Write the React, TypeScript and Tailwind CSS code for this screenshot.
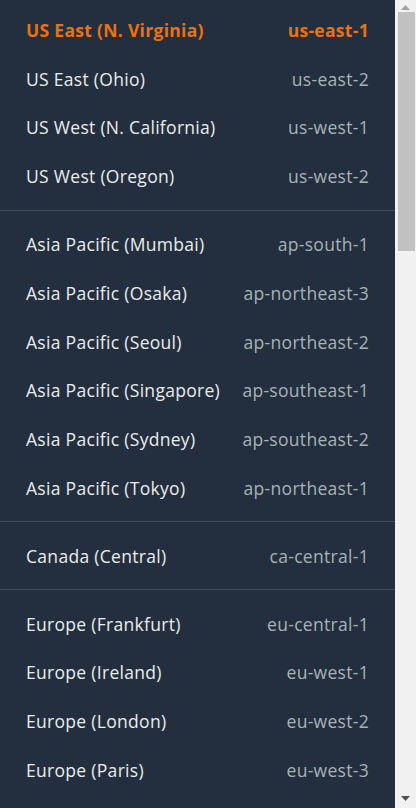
const groups: [string, string][][] = [
  [
    ["US East (N. Virginia)", "us-east-1"],
    ["US East (Ohio)", "us-east-2"],
    ["US West (N. California)", "us-west-1"],
    ["US West (Oregon)", "us-west-2"],
  ],
  [
    ["Asia Pacific (Mumbai)", "ap-south-1"],
    ["Asia Pacific (Osaka)", "ap-northeast-3"],
    ["Asia Pacific (Seoul)", "ap-northeast-2"],
    ["Asia Pacific (Singapore)", "ap-southeast-1"],
    ["Asia Pacific (Sydney)", "ap-southeast-2"],
    ["Asia Pacific (Tokyo)", "ap-northeast-1"],
  ],
  [["Canada (Central)", "ca-central-1"]],
  [
    ["Europe (Frankfurt)", "eu-central-1"],
    ["Europe (Ireland)", "eu-west-1"],
    ["Europe (London)", "eu-west-2"],
    ["Europe (Paris)", "eu-west-3"],
  ],
];

const selected = "us-east-1";

export default function App() {
  return (
    <div
      className="flex h-[808px] w-[416px] overflow-hidden bg-[#232f3e]"
      style={{ fontFamily: '"Open Sans", "Noto Sans", sans-serif' }}
    >
      <ul className="min-w-0 flex-1 pt-[5.5px]">
        {groups.map((g, gi) => (
          <li key={gi}>
            {gi > 0 && <div className="my-[9px] h-px bg-[#414d5c]" />}
            <ul>
              {g.map(([name, code]) => {
                const on = code === selected;
                return (
                  <li
                    key={code}
                    className={
                      "flex h-[48.8px] items-center justify-between whitespace-nowrap px-[26px] text-[17.5px] tracking-[0.3px] " +
                      (on ? "font-bold text-[#ec7211]" : "")
                    }
                  >
                    <span className={on ? "" : "text-[#eaeded]"}>{name}</span>
                    <span className={on ? "" : "text-[#a7b3b6]"}>{code}</span>
                  </li>
                );
              })}
            </ul>
          </li>
        ))}
      </ul>

      {/* scrollbar */}
      <div className="flex w-[21px] shrink-0 flex-col items-center bg-[#f1f1f1]">
        <svg width="9" height="5" viewBox="0 0 9 5" className="mt-[5px]">
          <path d="M0 5 L4.5 0 L9 5 Z" fill="#a3a3a3" />
        </svg>
        <div className="ml-[1px] mt-[2px] h-[239px] w-[17px] bg-[#c1c1c1]" />
        <div className="flex-1" />
        <svg width="9" height="5" viewBox="0 0 9 5" className="mb-[7px]">
          <path d="M0 0 L4.5 5 L9 0 Z" fill="#505050" />
        </svg>
      </div>
    </div>
  );
}
